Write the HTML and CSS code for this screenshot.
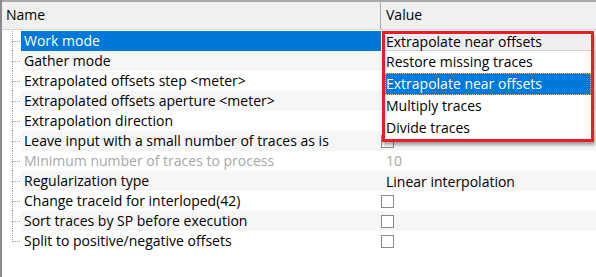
FILE: index.html
```html
<!DOCTYPE html>
<html lang="en">

<head>
  <meta charset="UTF-8">
  <title>Parameters</title>
  <link rel="stylesheet" href="styles.css">
</head>

<body>

  <div class="grid">
    <!-- Column headers -->
    <div class="head">
      <div class="head-name">Name</div>
      <div class="head-value">Value</div>
    </div>

    <!-- Parameter rows -->
    <div class="rows">
      <div class="row selected">
        <div class="tree"><div class="branch"></div><div class="stem"></div></div>
        <div class="name">Work mode</div>
        <div class="value"></div>
      </div>
      <div class="row">
        <div class="tree"><div class="branch"></div><div class="stem"></div></div>
        <div class="name">Gather mode</div>
        <div class="value"></div>
      </div>
      <div class="row">
        <div class="tree"><div class="branch"></div><div class="stem"></div></div>
        <div class="name">Extrapolated offsets step &lt;meter&gt;</div>
        <div class="value"></div>
      </div>
      <div class="row">
        <div class="tree"><div class="branch"></div><div class="stem"></div></div>
        <div class="name">Extrapolated offsets aperture &lt;meter&gt;</div>
        <div class="value"></div>
      </div>
      <div class="row">
        <div class="tree"><div class="branch"></div><div class="stem"></div></div>
        <div class="name">Extrapolation direction</div>
        <div class="value"></div>
      </div>
      <div class="row">
        <div class="tree"><div class="branch"></div><div class="stem"></div></div>
        <div class="name">Leave input with a small number of traces as is</div>
        <div class="value check-cell"><span class="check"></span></div>
      </div>
      <div class="row disabled">
        <div class="tree"><div class="branch"></div><div class="stem"></div></div>
        <div class="name">Minimum number of traces to process</div>
        <div class="value">10</div>
      </div>
      <div class="row">
        <div class="tree"><div class="branch"></div><div class="stem"></div></div>
        <div class="name">Regularization type</div>
        <div class="value combo-text">Linear interpolation</div>
      </div>
      <div class="row">
        <div class="tree"><div class="branch"></div><div class="stem"></div></div>
        <div class="name">Change traceId for interloped(42)</div>
        <div class="value check-cell"><span class="check"></span></div>
      </div>
      <div class="row">
        <div class="tree"><div class="branch"></div><div class="stem"></div></div>
        <div class="name">Sort traces by SP before execution</div>
        <div class="value check-cell"><span class="check"></span></div>
      </div>
      <div class="row last">
        <div class="tree"><div class="branch"></div><div class="stem"></div></div>
        <div class="name">Split to positive/negative offsets</div>
        <div class="value check-cell"><span class="check"></span></div>
      </div>
    </div>

    <!-- Open drop-down for Work mode -->
    <div class="dropdown">
      <div class="combo">Extrapolate near offsets</div>
      <ul class="options">
        <li>Restore missing traces</li>
        <li class="active">Extrapolate near offsets</li>
        <li>Multiply traces</li>
        <li>Divide traces</li>
      </ul>
    </div>
  </div>

</body>

</html>
```

FILE: styles.css
```css
/* Global */
body {
  margin: 0;
  background-color: #ffffff;
  font-family: "Open Sans", "Noto Sans", sans-serif;
  font-size: 14px;
  color: #000000;
}

/* Property grid */
.grid {
  position: relative;
  height: 277px;
  border-left: 2px solid #8c8c8c;
  box-sizing: border-box;
}

/* Header */
.head {
  display: flex;
  height: 30px;
  background-color: #f0f0f0;
  border-top: 2px solid #a9a9a9;
  border-bottom: 1px solid #d6d6d6;
  box-sizing: border-box;
}

.head-name {
  width: 379px;
  padding-left: 4px;
  border-right: 1px solid #a9a9a9;
  box-sizing: border-box;
  line-height: 26px;
}

.head-value {
  flex: 1;
  padding-left: 5px;
  line-height: 26px;
}

/* Rows */
.rows {
  padding-top: 1px;
}

.row {
  display: flex;
  height: 20px;
  line-height: 20px;
  white-space: nowrap;
}

.row:nth-child(even) .name,
.row:nth-child(even) .value {
  background-color: #f6f6f6;
}

.row.selected .name {
  background-color: #0078d7;
  color: #ffffff;
}

.row.disabled {
  color: #a8a8a8;
}

/* Tree connector lines */
.tree {
  width: 19px;
  flex-shrink: 0;
}

.branch {
  height: 11px;
  width: 8px;
  margin-left: 10px;
  border-left: 1px dotted #a0a0a0;
  border-bottom: 1px dotted #a0a0a0;
  box-sizing: border-box;
}

.stem {
  height: 9px;
  margin-left: 10px;
  border-left: 1px dotted #a0a0a0;
}

.row.last .stem {
  border-left: none;
}

.name {
  width: 360px;
  padding-left: 3px;
  box-sizing: border-box;
  overflow: hidden;
}

.value {
  flex: 1;
  padding-left: 5px;
  overflow: hidden;
}

.combo-text {
  padding-top: 1px;
  height: 19px;
}

/* Checkbox cells */
.value.check-cell {
  padding-left: 0;
  display: flex;
  align-items: center;
}

.check {
  width: 13px;
  height: 13px;
  border: 1px solid #8a8a8a;
  background-color: #ffffff;
  box-sizing: border-box;
}

/* Drop-down list (highlighted in red) */
.dropdown {
  position: absolute;
  left: 380px;
  top: 31px;
  width: 212px;
  border: 3px solid #ed1c24;
  background-color: #ffffff;
  box-shadow: 1px 3px 3px rgba(0, 0, 0, 0.35);
  box-sizing: border-box;
}

.combo {
  height: 17px;
  line-height: 16px;
  padding-left: 1px;
  background-color: #efefef;
  border-bottom: 1px solid #d0d0d0;
  box-sizing: border-box;
}

.options {
  list-style: none;
  margin: 0;
  padding: 0;
}

.options li {
  height: 22px;
  line-height: 22px;
  padding-left: 1px;
}

.options li.active {
  background-color: #0078d7;
  color: #ffffff;
  outline: 1px dotted #f0b070;
  outline-offset: -1px;
}
```
